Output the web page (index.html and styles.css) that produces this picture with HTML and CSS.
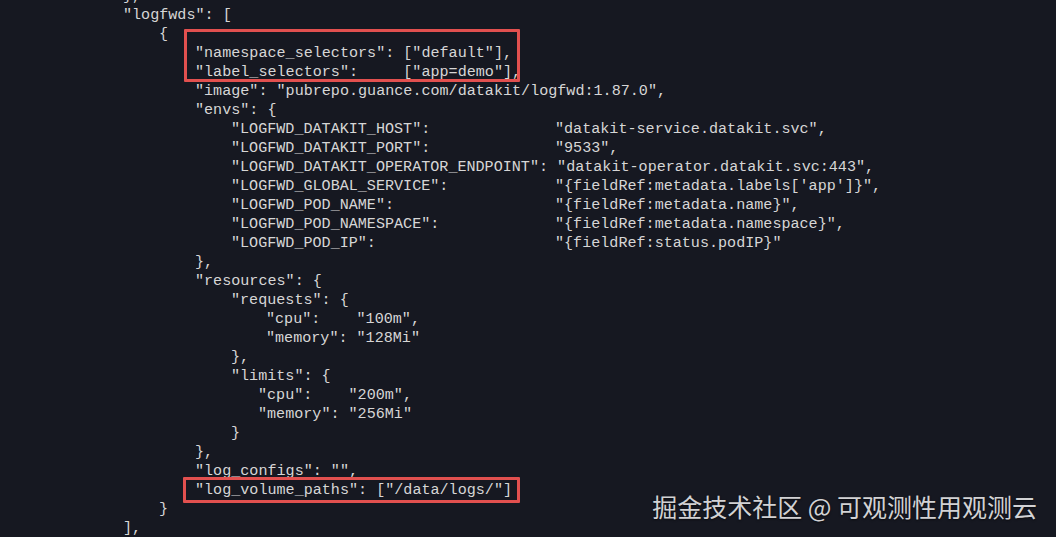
FILE: index.html
```html
<!DOCTYPE html>
<html lang="zh-CN">
<head>
    <meta charset="UTF-8">
    <meta name="viewport" content="width=device-width, initial-scale=1.0">
    <title>logfwds 配置</title>
    <link rel="stylesheet" href="styles.css">
</head>
<body>
    <div class="screen">
        <div class="code">
            <div class="line i1">},</div>
            <div class="line i1">"logfwds": [</div>
            <div class="line i2">{</div>
            <div class="line i3"><span class="k-sel">"namespace_selectors":</span>["default"],</div>
            <div class="line i3"><span class="k-sel">"label_selectors":</span>["app=demo"],</div>
            <div class="line i3">"image": "pubrepo.guance.com/datakit/logfwd:1.87.0",</div>
            <div class="line i3">"envs": {</div>
            <div class="line i4"><span class="k-env">"LOGFWD_DATAKIT_HOST": </span>"datakit-service.datakit.svc",</div>
            <div class="line i4"><span class="k-env">"LOGFWD_DATAKIT_PORT": </span>"9533",</div>
            <div class="line i4"><span class="k-env">"LOGFWD_DATAKIT_OPERATOR_ENDPOINT": </span>"datakit-operator.datakit.svc:443",</div>
            <div class="line i4"><span class="k-env">"LOGFWD_GLOBAL_SERVICE": </span>"{fieldRef:metadata.labels['app']}",</div>
            <div class="line i4"><span class="k-env">"LOGFWD_POD_NAME": </span>"{fieldRef:metadata.name}",</div>
            <div class="line i4"><span class="k-env">"LOGFWD_POD_NAMESPACE": </span>"{fieldRef:metadata.namespace}",</div>
            <div class="line i4"><span class="k-env">"LOGFWD_POD_IP": </span>"{fieldRef:status.podIP}"</div>
            <div class="line i3">},</div>
            <div class="line i3">"resources": {</div>
            <div class="line i4">"requests": {</div>
            <div class="line i5"><span class="k-res">"cpu":</span>"100m",</div>
            <div class="line i5"><span class="k-res">"memory":</span>"128Mi"</div>
            <div class="line i4">},</div>
            <div class="line i4">"limits": {</div>
            <div class="line i5b"><span class="k-res">"cpu":</span>"200m",</div>
            <div class="line i5b"><span class="k-res">"memory":</span>"256Mi"</div>
            <div class="line i4">}</div>
            <div class="line i3">},</div>
            <div class="line i3">"log_configs": "",</div>
            <div class="line i3">"log_volume_paths": ["/data/logs/"]</div>
            <div class="line i2">}</div>
            <div class="line i1">],</div>
        </div>

        <!-- 标注框 -->
        <div class="mark mark-selectors"></div>
        <div class="mark mark-paths"></div>

        <div class="watermark">掘金技术社区 @ 可观测性用观测云</div>
    </div>
</body>
</html>
```

FILE: styles.css
```css
:root {
    --bg: #161821;
    --text: #d6d6d6;
    --mark: #e2504f;
}

body {
    margin: 0;
    background: var(--bg);
    overflow: hidden;
}

.screen {
    position: relative;
    width: 1056px;
    height: 537px;
    overflow: hidden;
}

.code {
    margin-top: -13px;
    font-family: 'Liberation Mono', 'DejaVu Sans Mono', monospace;
    font-size: 15.1px;
    line-height: 19px;
    color: var(--text);
}

.line {
    height: 19px;
    white-space: pre;
}

.i1 { padding-left: 123px; }
.i2 { padding-left: 159px; }
.i3 { padding-left: 195px; }
.i4 { padding-left: 231px; }
.i5 { padding-left: 266px; }
.i5b { padding-left: 258px; }

.k-sel,
.k-env,
.k-res {
    display: inline-block;
}

.k-sel { width: 23ch; }
.k-env { min-width: 324px; }
.k-res { width: 10ch; }

.mark {
    position: absolute;
    border: 3px solid var(--mark);
    border-radius: 1px;
    box-sizing: border-box;
}

.mark-selectors {
    left: 184px;
    top: 29px;
    width: 336px;
    height: 53px;
}

.mark-paths {
    left: 183px;
    top: 477px;
    width: 337px;
    height: 26px;
}

.watermark {
    position: absolute;
    right: 19px;
    bottom: 16px;
    font-family: 'Noto Sans CJK SC', 'Noto Sans', sans-serif;
    font-size: 25px;
    line-height: 30px;
    color: #d2d2d4;
    text-shadow: 0 1px 2px rgba(0, 0, 0, 0.6);
}
```
